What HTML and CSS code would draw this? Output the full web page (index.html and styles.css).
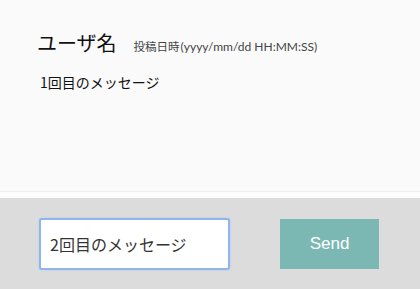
FILE: index.html
```html
<!DOCTYPE html>
<html lang="ja">
<head>
  <meta charset="UTF-8">
  <meta name="viewport" content="width=device-width, initial-scale=1.0">
  <title>Chat</title>
  <link rel="stylesheet" href="styles.css">
</head>
<body>
  <div class="chat">
    <div class="message">
      <div class="message-head">
        <span class="user-name">ユーザ名</span>
        <span class="posted-at">投稿日時<span class="posted-format">(yyyy/mm/dd HH:MM:SS)</span></span>
      </div>
      <p class="message-body">1回目のメッセージ</p>
    </div>
  </div>
  <form class="composer">
    <input type="text" class="message-input" value="2回目のメッセージ">
    <button type="button" class="send-btn">Send</button>
  </form>
</body>
</html>
```
FILE: styles.css
```css
body {
  margin: 0;
  height: 289px;
  overflow: hidden;
  font-family: Lato, "Noto Sans CJK JP", sans-serif;
  color: #111;
  background: #fafafa;
  display: flex;
  flex-direction: column;
}
.chat {
  height: 198px;
  box-sizing: border-box;
  background: #fafafa;
  border-bottom: 6px solid #fcfcfc;
  box-shadow: inset 0 -7px 0 -6px #eeeeee;
}
.message {
  padding: 29px 38px 29px 37px;
}
.message-head {
  display: flex;
  align-items: baseline;
  gap: 17px;
}
.user-name {
  font-family: "Noto Sans CJK JP", sans-serif;
  font-size: 20px;
  line-height: 28px;
}
.posted-at {
  font-size: 11.5px;
  color: #444;
}
.posted-format {
  margin-left: 1px;
  font-size: 12px;
}
.message-body {
  margin: 15px 0 0 3px;
  font-family: "Noto Sans CJK JP", sans-serif;
  font-size: 14px;
}
.composer {
  flex: 1;
  margin: 0;
  background: #dcdcdc;
  display: flex;
  align-items: center;
  padding: 0 41px 0 39px;
  gap: 50px;
}
.message-input {
  width: 191px;
  height: 52px;
  box-sizing: border-box;
  border: 2px solid #8fb6ec;
  border-radius: 3px;
  box-shadow: 0 0 2px #a9c8f2;
  outline: none;
  padding: 0 9px;
  font-family: "Noto Sans CJK JP", sans-serif;
  font-size: 16px;
  color: #333;
  background: #fff;
}
.send-btn {
  width: 99px;
  height: 50px;
  border: none;
  background: #7bb8b4;
  color: #fff;
  font-family: "Liberation Sans", sans-serif;
  font-size: 17px;
}
```
